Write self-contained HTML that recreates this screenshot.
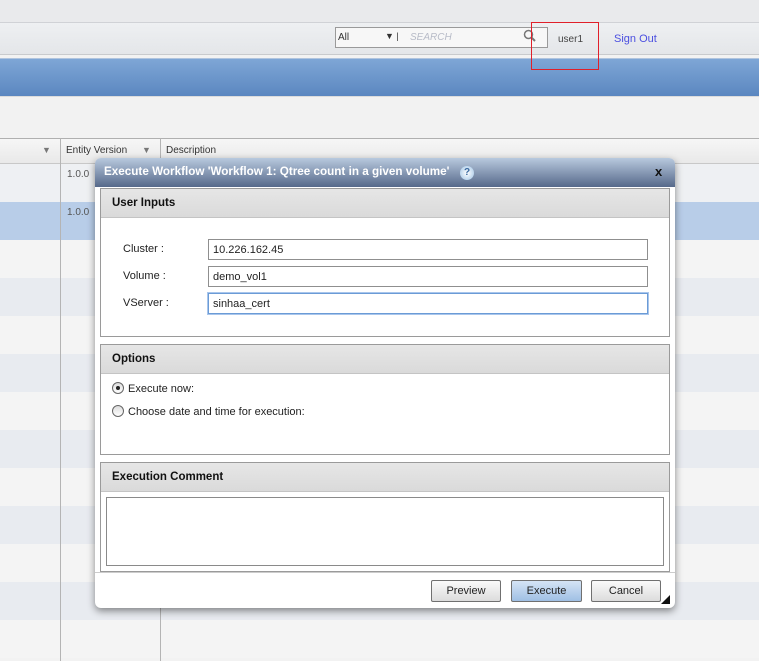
<!DOCTYPE html>
<html><head><style>
*{box-sizing:border-box;margin:0;padding:0}
body{width:759px;height:661px;overflow:hidden;position:relative;background:#f2f2f2;font-family:"Liberation Sans",sans-serif;font-size:11px;color:#222}
.abs{position:absolute}
.row{position:absolute;left:0;width:759px;height:38px}
.sec{position:absolute;left:100px;width:570px;border:1px solid #9a9a9a;background:#fff}
.sh{height:29px;background:linear-gradient(#e6e6e6,#dadada);border-bottom:1px solid #c4c4c4;font-weight:bold;font-size:11.5px;padding:8px 0 0 11px;color:#111}
.inp{position:absolute;left:208px;width:440px;height:21px;border:1px solid #8f8f8f;background:#fff;padding:4px 0 0 4px;font-size:11px}
.lbl{position:absolute;left:123px;font-size:11px}
.btn{position:absolute;top:580px;height:22px;border:1px solid #707070;border-radius:2px;background:linear-gradient(#fafafa,#dcdcdc);text-align:center;font-size:11px;padding-top:4px}
.radio{position:absolute;left:112px;width:12px;height:12px;border:1px solid #666;border-radius:50%;background:linear-gradient(#ddd,#fff)}
</style></head><body>
<div class="abs" style="left:0;top:0;width:759px;height:22px;background:#e9eaec"></div>
<div class="abs" style="left:0;top:22px;width:759px;height:33px;background:linear-gradient(#eef0f2,#e4e6e9);border-top:1px solid #d0d2d6;border-bottom:1px solid #c8cacd"></div>
<div class="abs" style="left:335px;top:27px;width:213px;height:21px;border:1px solid #9a9a9a;background:#f7f7f7"></div>
<div class="abs" style="left:338px;top:32px;font-size:10px;color:#333">All</div>
<div class="abs" style="left:385px;top:31px;font-size:9px;color:#333">▼ |</div>
<div class="abs" style="left:410px;top:32px;font-size:10px;color:#b8bcc8;font-style:italic">SEARCH</div>
<svg class="abs" style="left:523px;top:29px" width="14" height="14"><circle cx="5.5" cy="5.5" r="4" fill="none" stroke="#777" stroke-width="1.5"/><path d="M8.5 8.5L12 12" stroke="#777" stroke-width="2"/></svg>
<div class="abs" style="left:558px;top:34px;font-size:10px;color:#444">user1</div>
<div class="abs" style="left:614px;top:33px;font-size:11px;color:#4b4fe0">Sign Out</div>
<div class="abs" style="left:0;top:58px;width:759px;height:38px;background:linear-gradient(#7ea6d6,#5b87c0);border-top:1px solid #b0c4de"></div>
<div class="abs" style="left:531px;top:22px;width:68px;height:48px;border:1px solid #e0202a"></div>
<div class="abs" style="left:0;top:96px;width:759px;height:42px;background:#f2f2f2;border-top:1px solid #dcdcdc"></div>
<div class="abs" style="left:0;top:138px;width:759px;height:26px;background:linear-gradient(#f6f6f6,#e9e9e9);border-top:1px solid #b0b0b0;border-bottom:1px solid #c8c8c8"></div>
<div class="abs" style="left:42px;top:145px;font-size:9px;color:#777">▼</div>
<div class="abs" style="left:66px;top:145px;font-size:10px;color:#333">Entity Version</div>
<div class="abs" style="left:142px;top:145px;font-size:9px;color:#777">▼</div>
<div class="abs" style="left:166px;top:145px;font-size:10px;color:#333">Description</div>
<div class="row" style="top:164px;background:#eef0f3"></div>
<div class="row" style="top:202px;background:#b8cde8"></div>
<div class="row" style="top:240px;background:#f4f4f4"></div>
<div class="row" style="top:278px;background:#e8ebf0"></div>
<div class="row" style="top:316px;background:#f4f4f4"></div>
<div class="row" style="top:354px;background:#e8ebf0"></div>
<div class="row" style="top:392px;background:#f4f4f4"></div>
<div class="row" style="top:430px;background:#e8ebf0"></div>
<div class="row" style="top:468px;background:#f4f4f4"></div>
<div class="row" style="top:506px;background:#e8ebf0"></div>
<div class="row" style="top:544px;background:#f4f4f4"></div>
<div class="row" style="top:582px;background:#e8ebf0"></div>
<div class="row" style="top:620px;background:#f4f4f4"></div>
<div class="abs" style="left:67px;top:169px;font-size:10px;color:#555">1.0.0</div>
<div class="abs" style="left:67px;top:207px;font-size:10px;color:#555">1.0.0</div>
<div class="abs" style="left:60px;top:138px;width:1px;height:523px;background:#b4b4b4"></div>
<div class="abs" style="left:160px;top:138px;width:1px;height:523px;background:#b4b4b4"></div>
<div class="abs" style="left:95px;top:158px;width:580px;height:450px;background:#fff;border-radius:6px;box-shadow:0 3px 8px rgba(0,0,0,.45)"></div>
<div class="abs" style="left:95px;top:158px;width:580px;height:29px;border-radius:6px 6px 0 0;background:linear-gradient(#b8c9de,#56698a)"></div>
<div class="abs" style="left:104px;top:165px;font-size:11.7px;font-weight:bold;color:#fff">Execute Workflow 'Workflow 1: Qtree count in a given volume'</div>
<div class="abs" style="left:460px;top:166px;width:14px;height:14px;border-radius:50%;background:radial-gradient(#fff,#9ec3e6);color:#3a6aa0;font-size:10px;font-weight:bold;text-align:center;line-height:14px">?</div>
<div class="abs" style="left:655px;top:164px;font-size:13px;font-weight:bold;color:#111">x</div>
<div class="sec" style="top:188px;height:149px"><div class="sh">User Inputs</div></div>
<div class="lbl" style="top:243px">Cluster :</div>
<div class="lbl" style="top:270px">Volume :</div>
<div class="lbl" style="top:297px">VServer :</div>
<div class="inp" style="top:239px">10.226.162.45</div>
<div class="inp" style="top:266px">demo_vol1</div>
<div class="inp" style="top:293px;border:1px solid #6b9bd6;box-shadow:0 0 0 1px #a9c6ec">sinhaa_cert</div>
<div class="sec" style="top:344px;height:111px"><div class="sh">Options</div></div>
<div class="radio" style="top:382px"></div><div class="abs" style="left:116px;top:386px;width:4px;height:4px;border-radius:50%;background:#222"></div>
<div class="abs" style="left:128px;top:383px">Execute now:</div>
<div class="radio" style="top:405px"></div>
<div class="abs" style="left:128px;top:406px">Choose date and time for execution:</div>
<div class="sec" style="top:462px;height:110px"><div class="sh">Execution Comment</div></div>
<div class="abs" style="left:106px;top:497px;width:558px;height:69px;border:1px solid #8a8a8a;background:#fff"></div>
<div class="abs" style="left:95px;top:572px;width:580px;height:1px;background:#ccc"></div>
<div class="btn" style="left:431px;width:70px">Preview</div>
<div class="btn" style="left:511px;width:71px;background:linear-gradient(#d5e4f5,#9fbfe4)">Execute</div>
<div class="btn" style="left:591px;width:70px">Cancel</div>
<svg class="abs" style="left:661px;top:595px" width="9" height="9"><path d="M9 0V9H0Z" fill="#111"/></svg>
</body></html>
